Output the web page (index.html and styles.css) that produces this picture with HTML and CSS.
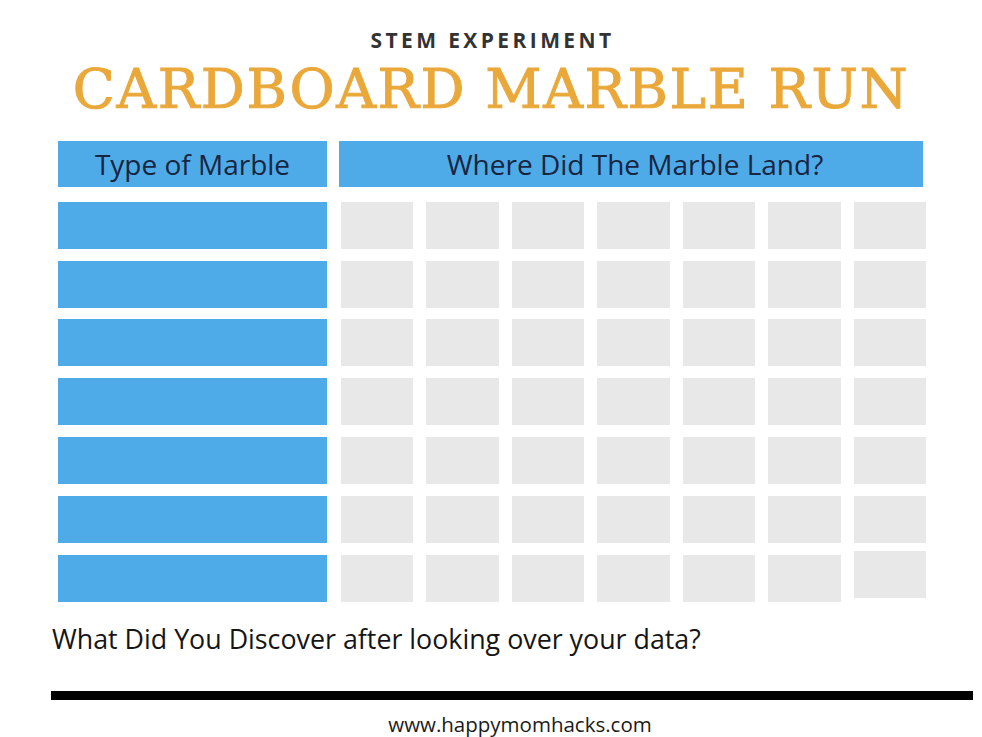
FILE: index.html
```html
<!DOCTYPE html>
<html>
<head>
<meta charset="utf-8">
<link rel="stylesheet" href="styles.css">
</head>
<body>
<div class="page">
  <div class="kicker">STEM EXPERIMENT</div>
  <h1 class="title">CARDBOARD MARBLE RUN</h1>
  <div class="table">
    <div class="head head-left">Type of Marble</div>
    <div class="head head-right">Where Did The Marble Land?</div>

    <div class="name"></div>
    <div class="cells"><span></span><span></span><span></span><span></span><span></span><span></span><span></span></div>
    <div class="name"></div>
    <div class="cells"><span></span><span></span><span></span><span></span><span></span><span></span><span></span></div>
    <div class="name"></div>
    <div class="cells"><span></span><span></span><span></span><span></span><span></span><span></span><span></span></div>
    <div class="name"></div>
    <div class="cells"><span></span><span></span><span></span><span></span><span></span><span></span><span></span></div>
    <div class="name"></div>
    <div class="cells"><span></span><span></span><span></span><span></span><span></span><span></span><span></span></div>
    <div class="name"></div>
    <div class="cells"><span></span><span></span><span></span><span></span><span></span><span></span><span></span></div>
    <div class="name"></div>
    <div class="cells cells-last"><span></span><span></span><span></span><span></span><span></span><span></span><span class="lifted"></span></div>
  </div>
  <p class="question">What Did You Discover after looking over your data?</p>
  <div class="rule"></div>
  <div class="footer">www.happymomhacks.com</div>
</div>
</body>
</html>
```

FILE: styles.css
```css
html, body {
  margin: 0;
  padding: 0;
  background: #ffffff;
}

.page {
  width: 982px;
  height: 737px;
  overflow: hidden;
  display: flex;
  flex-direction: column;
  font-family: "Open Sans", "Liberation Sans", sans-serif;
}

.kicker {
  margin-top: 28px;
  height: 24px;
  line-height: 24px;
  font-size: 21px;
  font-weight: 700;
  letter-spacing: 3.4px;
  color: #333333;
  text-align: center;
  padding-left: 3px;
}

.title {
  margin: 7px 0 0 0;
  height: 60px;
  line-height: 60px;
  font-family: "DejaVu Serif", "Liberation Serif", serif;
  font-weight: 400;
  font-size: 55px;
  letter-spacing: 1.6px;
  color: #eaa83a;
  -webkit-text-stroke: 1px #eaa83a;
  text-align: center;
  white-space: nowrap;
}

.table {
  margin: 22px 0 0 58px;
  display: grid;
  grid-template-columns: 269px 587px;
  grid-template-rows: 49px repeat(7, 47px);
  column-gap: 12px;
  row-gap: 11.8px;
}

.head {
  align-self: start;
  height: 46px;
  line-height: 46px;
  background: #4fabe8;
  color: #17253f;
  font-size: 28px;
  text-align: center;
  white-space: nowrap;
}

.head-right {
  width: 584px;
  box-sizing: border-box;
  padding-left: 8px;
}

.name {
  background: #4fabe8;
}

.cells {
  margin-left: 2px;
  display: grid;
  grid-template-columns: repeat(7, 1fr);
  column-gap: 13px;
}

.cells span {
  display: block;
  background: #e8e8e8;
}

.cells-last .lifted {
  margin-top: -4px;
  margin-bottom: 4px;
}

.question {
  margin: 17px 0 0 52px;
  height: 40px;
  line-height: 40px;
  font-size: 26.8px;
  color: #151515;
  white-space: nowrap;
}

.rule {
  margin: 32px 0 0 51px;
  width: 922px;
  height: 12px;
  background: #000000;
}

.footer {
  margin-top: 11px;
  padding-left: 58px;
  text-align: center;
  font-size: 20.5px;
  line-height: 26px;
  color: #1a1a1a;
}
```
